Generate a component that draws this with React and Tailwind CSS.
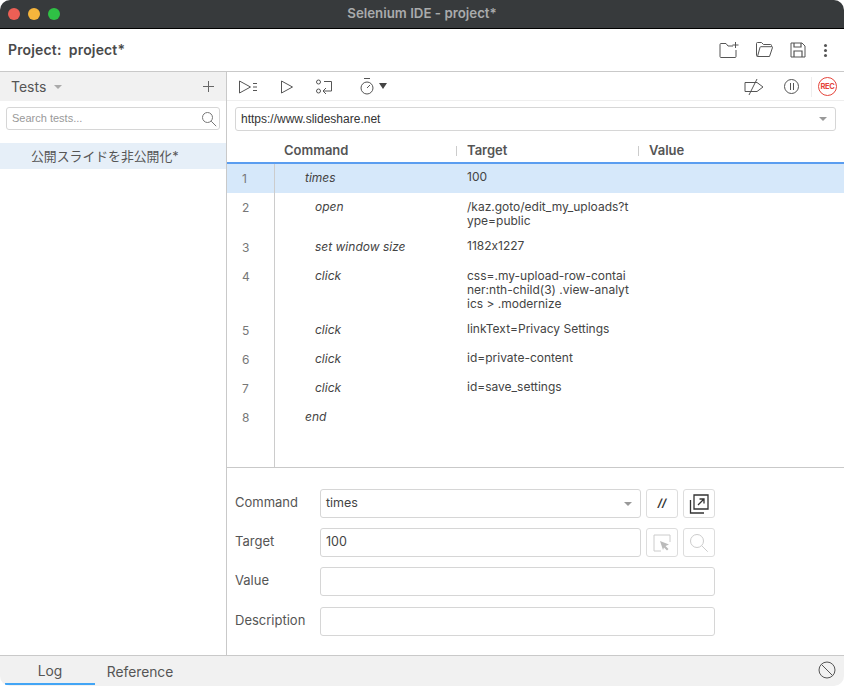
import React from "react";

const rows = [
  { n: 1, cmd: "times", indent: false, target: ["100"], h: "h-[29px]", active: true, tc: "pt-[6px] leading-[13.5px]" },
  { n: 2, cmd: "open", indent: true, target: ["/kaz.goto/edit_my_uploads?t", "ype=public"], h: "h-[40px]", tc: "pt-[7px] leading-[13.5px]" },
  { n: 3, cmd: "set window size", indent: true, target: ["1182x1227"], h: "h-[29px]", tc: "pt-[6px] leading-[13.5px]" },
  { n: 4, cmd: "click", indent: true, target: ["css=.my-upload-row-contai", "ner:nth-child(3) .view-analyt", "ics > .modernize"], h: "h-[54px]", tc: "pt-[7px] leading-[14px]" },
  { n: 5, cmd: "click", indent: true, target: ["linkText=Privacy Settings"], h: "h-[29px]", tc: "pt-[6px] leading-[13.5px]" },
  { n: 6, cmd: "click", indent: true, target: ["id=private-content"], h: "h-[29px]", tc: "pt-[6px] leading-[13.5px]" },
  { n: 7, cmd: "click", indent: true, target: ["id=save_settings"], h: "h-[29px]", tc: "pt-[6px] leading-[13.5px]" },
  { n: 8, cmd: "end", indent: false, target: [], h: "h-[29px]", tc: "" },
];

const Icon = ({ w = 20, h = 20, children, className = "" }) => (
  <svg width={w} height={h} viewBox={`0 0 ${w} ${h}`} fill="none" stroke="#555" strokeWidth="1" className={className}>
    {children}
  </svg>
);

const Caret = ({ className = "" }) => (
  <div className={`w-0 h-0 border-x-[4px] border-x-transparent border-t-[4px] border-t-[#999] ${className}`} />
);

const FormRow = ({ label, children }) => (
  <div className="flex items-center h-[29px]">
    <div className="w-[85px] text-[13px] text-[#555] -mt-[2px]">{label}</div>
    {children}
  </div>
);

const SmallBtn = ({ children, className = "" }) => (
  <div className={`w-[32px] h-[29px] border border-[#ddd] rounded-[3px] flex items-center justify-center ${className}`}>
    {children}
  </div>
);

export default function App() {
  return (
    <div
      className="w-[844px] h-[686px] flex flex-col overflow-hidden rounded-[10px] bg-white text-[#555] [font-feature-settings:'calt'_0]"
      style={{ fontFamily: "Inter, 'Liberation Sans', 'Noto Sans CJK JP', sans-serif" }}
    >
      {/* title bar */}
      <div className="relative h-[29px] shrink-0 bg-[#373a3c] border-b border-black flex items-center justify-center">
        <div className="absolute left-[8px] top-[8px] flex gap-[8px]">
          <div className="w-[12px] h-[12px] rounded-full bg-[#ec5f55]" />
          <div className="w-[12px] h-[12px] rounded-full bg-[#f6b53c]" />
          <div className="w-[12px] h-[12px] rounded-full bg-[#2fc145]" />
        </div>
        <div className="text-[13.3px] font-semibold text-[#a9abac]">Selenium IDE - project*</div>
      </div>

      {/* project bar */}
      <div className="h-[43px] shrink-0 border-b border-[#c9c9c9] flex items-center pl-[8px] pr-[17px]">
        <div className="text-[14px] font-semibold text-[#4a4a4a] whitespace-pre tracking-[0.15px] -mt-[1px]">Project:  project*</div>
        <div className="ml-auto flex items-center">
          <Icon w={20} h={18} className="mr-[16px]">
            <path d="M1 3.5a1 1 0 0 1 1-1h5l2 2.5h5M17 9v6.5a1 1 0 0 1-1 1H2a1 1 0 0 1-1-1V3.5" />
            <path d="M16.5 1v6M13.5 4h6" />
          </Icon>
          <Icon w={18} h={18} className="mr-[17px]">
            <path d="M2.5 15.5a1 1 0 0 1-1-1V2.5a1 1 0 0 1 1-1h4l2 2h7a1 1 0 0 1 1 1v1" />
            <path d="M2.5 15.5h12l3-9a.6.6 0 0 0-.6-.8H6a1 1 0 0 0-1 .7z" />
          </Icon>
          <Icon w={16} h={16} className="mr-[18px]">
            <path d="M1 1h11l3 3v11H1z" />
            <path d="M4 1v4h7V1M4 15V9h8v6" strokeWidth="1.2" />
          </Icon>
          <div className="flex flex-col gap-[2px]">
            <div className="w-[3px] h-[3px] rounded-full bg-[#555]" />
            <div className="w-[3px] h-[3px] rounded-full bg-[#555]" />
            <div className="w-[3px] h-[3px] rounded-full bg-[#555]" />
          </div>
        </div>
      </div>

      <div className="flex flex-1 min-h-0">
        {/* sidebar */}
        <div className="w-[227px] shrink-0 border-r border-[#c9c9c9] flex flex-col">
          <div className="h-[29px] bg-[#f1f1f1] flex items-center pl-[11px] pr-[12px]">
            <span className="text-[14px] text-[#555]">Tests</span>
            <Caret className="ml-[8px] border-t-[#aaa]" />
            <Icon w={11} h={11} className="ml-auto">
              <path d="M5.5 0v11M0 5.5h11" stroke="#666" />
            </Icon>
          </div>
          <div className="mt-[6px] mx-[6px] h-[23px] border border-[#d6d6d6] rounded-[3px] flex items-center pl-[5px] pr-[2px]">
            <span className="text-[11px] text-[#999]" style={{ fontFamily: "'Liberation Sans', sans-serif" }}>Search tests...</span>
            <Icon w={16} h={16} className="ml-auto">
              <circle cx="6.5" cy="6.5" r="5" stroke="#777" />
              <path d="M10.2 10.2l5 5" stroke="#777" />
            </Icon>
          </div>
          <div className="mt-[13px] h-[26px] bg-[#e6eff8] flex items-center pl-[31px] pt-[1px] text-[12.85px] text-[#555]">
            公開スライドを非公開化*
          </div>
        </div>

        {/* main */}
        <div className="flex-1 min-w-0 flex flex-col">
          <div className="h-[29px] shrink-0 border-b border-[#eee] flex items-center pl-[12px] pr-[7px] pt-[1px]">
            <Icon w={18} h={14} className="mr-[24px]">
              <path d="M0.5 1v12l11-6z" />
              <path d="M14 3.5h4M14 7h4M14 10.5h4" />
            </Icon>
            <Icon w={12} h={14} className="mr-[23px]">
              <path d="M0.5 1v12l11-6z" />
            </Icon>
            <Icon w={17} h={16} className="mr-[26px]">
              <circle cx="2.5" cy="3" r="2" />
              <circle cx="2.5" cy="12" r="2" />
              <path d="M8 2.5h7.5v9.5H7M10 9l-3 3 3 3" />
            </Icon>
            <Icon w={14} h={17} className="ml-[1px]">
              <path d="M4 .5h6" />
              <circle cx="7" cy="10" r="6" />
              <path d="M7 10l3-3" />
            </Icon>
            <div className="ml-[5px] w-0 h-0 border-x-[4px] border-x-transparent border-t-[6px] border-t-[#444] -mt-[2px]" />
            <Icon w={20} h={18} className="ml-auto mr-[20px]">
              <path d="M1 4.5h12l6 4.5-6 4.5H1z" />
              <path d="M13 1L5 17" />
            </Icon>
            <div className="w-[15px] h-[15px] rounded-full border border-[#555] flex items-center justify-center gap-[2px] mr-[12px]">
              <div className="w-px h-[7px] bg-[#555]" />
              <div className="w-px h-[7px] bg-[#555]" />
            </div>
            <div className="w-px h-[20px] bg-[#eee] mr-[6px]" />
            <div className="w-[19px] h-[19px] rounded-full border border-[#e5453b] flex items-center justify-center text-[7.5px] font-bold tracking-[-0.3px] text-[#e5453b]">REC</div>
          </div>

          <div className="mt-[6px] mx-[8px] h-[24px] shrink-0 border border-[#d6d6d6] rounded-[3px] flex items-center pl-[5px] pr-[8px]">
            <span className="text-[12px] text-[#333]" style={{ fontFamily: "'Liberation Sans', sans-serif" }}>https://www.slideshare.net</span>
            <Caret className="ml-auto" />
          </div>

          {/* table head */}
          <div className="mt-[7px] h-[26px] shrink-0 flex items-center pt-[2px] text-[13px] font-semibold text-[#555] border-b-2 border-[#5a9df0]">
            <div className="w-[57px] shrink-0" />
            <div className="w-[172px] shrink-0">Command</div>
            <div className="w-[182px] shrink-0 flex items-center">
              <div className="w-px h-[10px] bg-[#ccc] mr-[10px]" />Target
            </div>
            <div className="flex items-center">
              <div className="w-px h-[10px] bg-[#ccc] mr-[10px]" />Value
            </div>
          </div>

          {/* rows */}
          <div className="flex-1 min-h-0 border-b border-[#c9c9c9] flex">
            <div className="flex-1 min-w-0 relative">
              <div className="absolute left-[47px] top-0 bottom-0 w-px bg-[#ccc]" />
              {rows.map((r) => (
                <div key={r.n} className={`flex text-[12px] ${r.h} ${r.active ? "bg-[#d6e8fa]" : ""}`}>
                  <div className="w-[47px] shrink-0 pl-[15px] pt-[8px] leading-[14px] text-[#777]">{r.n}</div>
                  <div className={`w-[193px] shrink-0 italic pt-[7px] leading-[14px] text-[#444] ${r.indent ? "pl-[41px]" : "pl-[31px]"}`}>{r.cmd}</div>
                  <div className={`text-[#444] whitespace-pre ${r.tc}`}>
                    {r.target.map((t) => (
                      <div key={t}>{t}</div>
                    ))}
                  </div>
                </div>
              ))}
            </div>
          </div>

          {/* command form */}
          <div className="h-[187px] shrink-0 px-[8px] pt-[21px] flex flex-col">
            <FormRow label="Command">
              <div className="w-[321px] h-[29px] border border-[#d6d6d6] rounded-[3px] flex items-center pl-[5px] pr-[8px] text-[12.5px] text-[#444]">
                times
                <Caret className="ml-auto" />
              </div>
              <SmallBtn className="ml-[5px]"><span className="italic font-bold text-[11px] text-[#333]">//</span></SmallBtn>
              <SmallBtn className="ml-[5px]">
                <Icon w={22} h={22}>
                  <path d="M6 2h14v14H6z" stroke="#333" strokeWidth="1.3" />
                  <path d="M10 12l6-6M11.5 6H16v4.5" stroke="#333" strokeWidth="1.3" />
                  <path d="M2.5 7v13H16" stroke="#333" strokeWidth="1.3" />
                </Icon>
              </SmallBtn>
            </FormRow>
            <div className="mt-[10px]">
              <FormRow label="Target">
                <div className="w-[321px] h-[29px] border border-[#d6d6d6] rounded-[3px] flex items-center pl-[5px] text-[12.5px] text-[#444]">100</div>
                <SmallBtn className="ml-[5px]">
                  <Icon w={18} h={18}>
                    <path d="M8 17H1V1h16v7" stroke="#ccc" />
                    <path d="M7 7l9 3.5-3.5 1.5 3 3-1.5 1.5-3-3L10 16z" fill="#bbb" stroke="none" />
                  </Icon>
                </SmallBtn>
                <SmallBtn className="ml-[5px]">
                  <Icon w={20} h={20}>
                    <circle cx="8" cy="8" r="6.5" stroke="#ccc" />
                    <path d="M12.7 12.7l6 6" stroke="#ccc" />
                  </Icon>
                </SmallBtn>
              </FormRow>
            </div>
            <div className="mt-[10px]">
              <FormRow label="Value">
                <div className="w-[395px] h-[29px] border border-[#d6d6d6] rounded-[3px]" />
              </FormRow>
            </div>
            <div className="mt-[11px]">
              <FormRow label="Description">
                <div className="w-[395px] h-[29px] border border-[#d6d6d6] rounded-[3px]" />
              </FormRow>
            </div>
          </div>
        </div>
      </div>

      {/* bottom tabs */}
      <div className="h-[31px] shrink-0 bg-[#f1f1f1] border-t border-[#c9c9c9] flex items-stretch pl-[5px] pr-[8px]">
        <div className="w-[90px] h-[29px] border-b-2 border-[#42a5f5] flex items-center justify-center text-[13.8px] text-[#555] pt-[4px]">Log</div>
        <div className="w-[90px] flex items-center justify-center text-[13.8px] text-[#555] pt-[2px]">Reference</div>
        <Icon w={18} h={18} className="ml-auto self-center -mt-[3px]">
          <circle cx="9" cy="9" r="8" />
          <path d="M3.5 3.5l11 11" />
        </Icon>
      </div>
    </div>
  );
}
